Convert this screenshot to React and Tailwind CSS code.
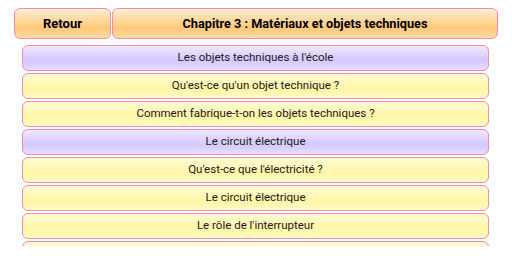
import React from "react";

const items = [
  { label: "Les objets techniques à l'école", tone: "purple" },
  { label: "Qu'est-ce qu'un objet technique ?", tone: "yellow" },
  { label: "Comment fabrique-t-on les objets techniques ?", tone: "yellow" },
  { label: "Le circuit électrique", tone: "purple" },
  { label: "Qu'est-ce que l'électricité ?", tone: "yellow" },
  { label: "Le circuit électrique", tone: "yellow" },
  { label: "Le rôle de l'interrupteur", tone: "yellow" },
  { label: "", tone: "yellow" },
];

const tones = {
  purple: "bg-linear-to-b from-[#efe8ff] via-[#d5c8ff] via-60% to-[#e6ddff]",
  yellow: "bg-linear-to-b from-[#fffbd6] via-[#fff5a4] via-60% to-[#fffac4]",
};

export default function App() {
  return (
    <div
      className="w-[512px] h-[256px] overflow-hidden bg-white"
      style={{ fontFamily: "Roboto, 'Noto Sans', sans-serif" }}
    >
      {/* Header */}
      <div className="flex gap-px pl-[14px] pt-[8px]">
        <button className="w-[97px] h-[31px] rounded-[6px] border-[1.5px] border-[#f08cb0] bg-linear-to-b from-[#ffefd2] via-[#ffc878] via-65% to-[#ffdca6] text-[13px] font-bold text-black">
          Retour
        </button>
        <div className="w-[386px] h-[31px] rounded-[6px] border-[1.5px] border-[#f08cb0] bg-linear-to-b from-[#ffefd2] via-[#ffc878] via-65% to-[#ffdca6] flex items-center justify-center text-[12.7px] font-bold text-black">
          Chapitre 3 : Matériaux et objets techniques
        </div>
      </div>

      {/* Liste (zone défilante) */}
      <div className="mt-[6px] h-[201px] overflow-hidden">
        <div className="flex flex-col gap-[2px] pl-[22px]">
          {items.map((item, i) => (
            <div
              key={i}
              className={`w-[467px] h-[26px] shrink-0 rounded-[6px] border-[1.5px] border-[#f08cb0] flex items-center justify-center text-[11.5px] text-[#1a1a1a] ${tones[item.tone]}`}
            >
              {item.label}
            </div>
          ))}
        </div>
      </div>
    </div>
  );
}
